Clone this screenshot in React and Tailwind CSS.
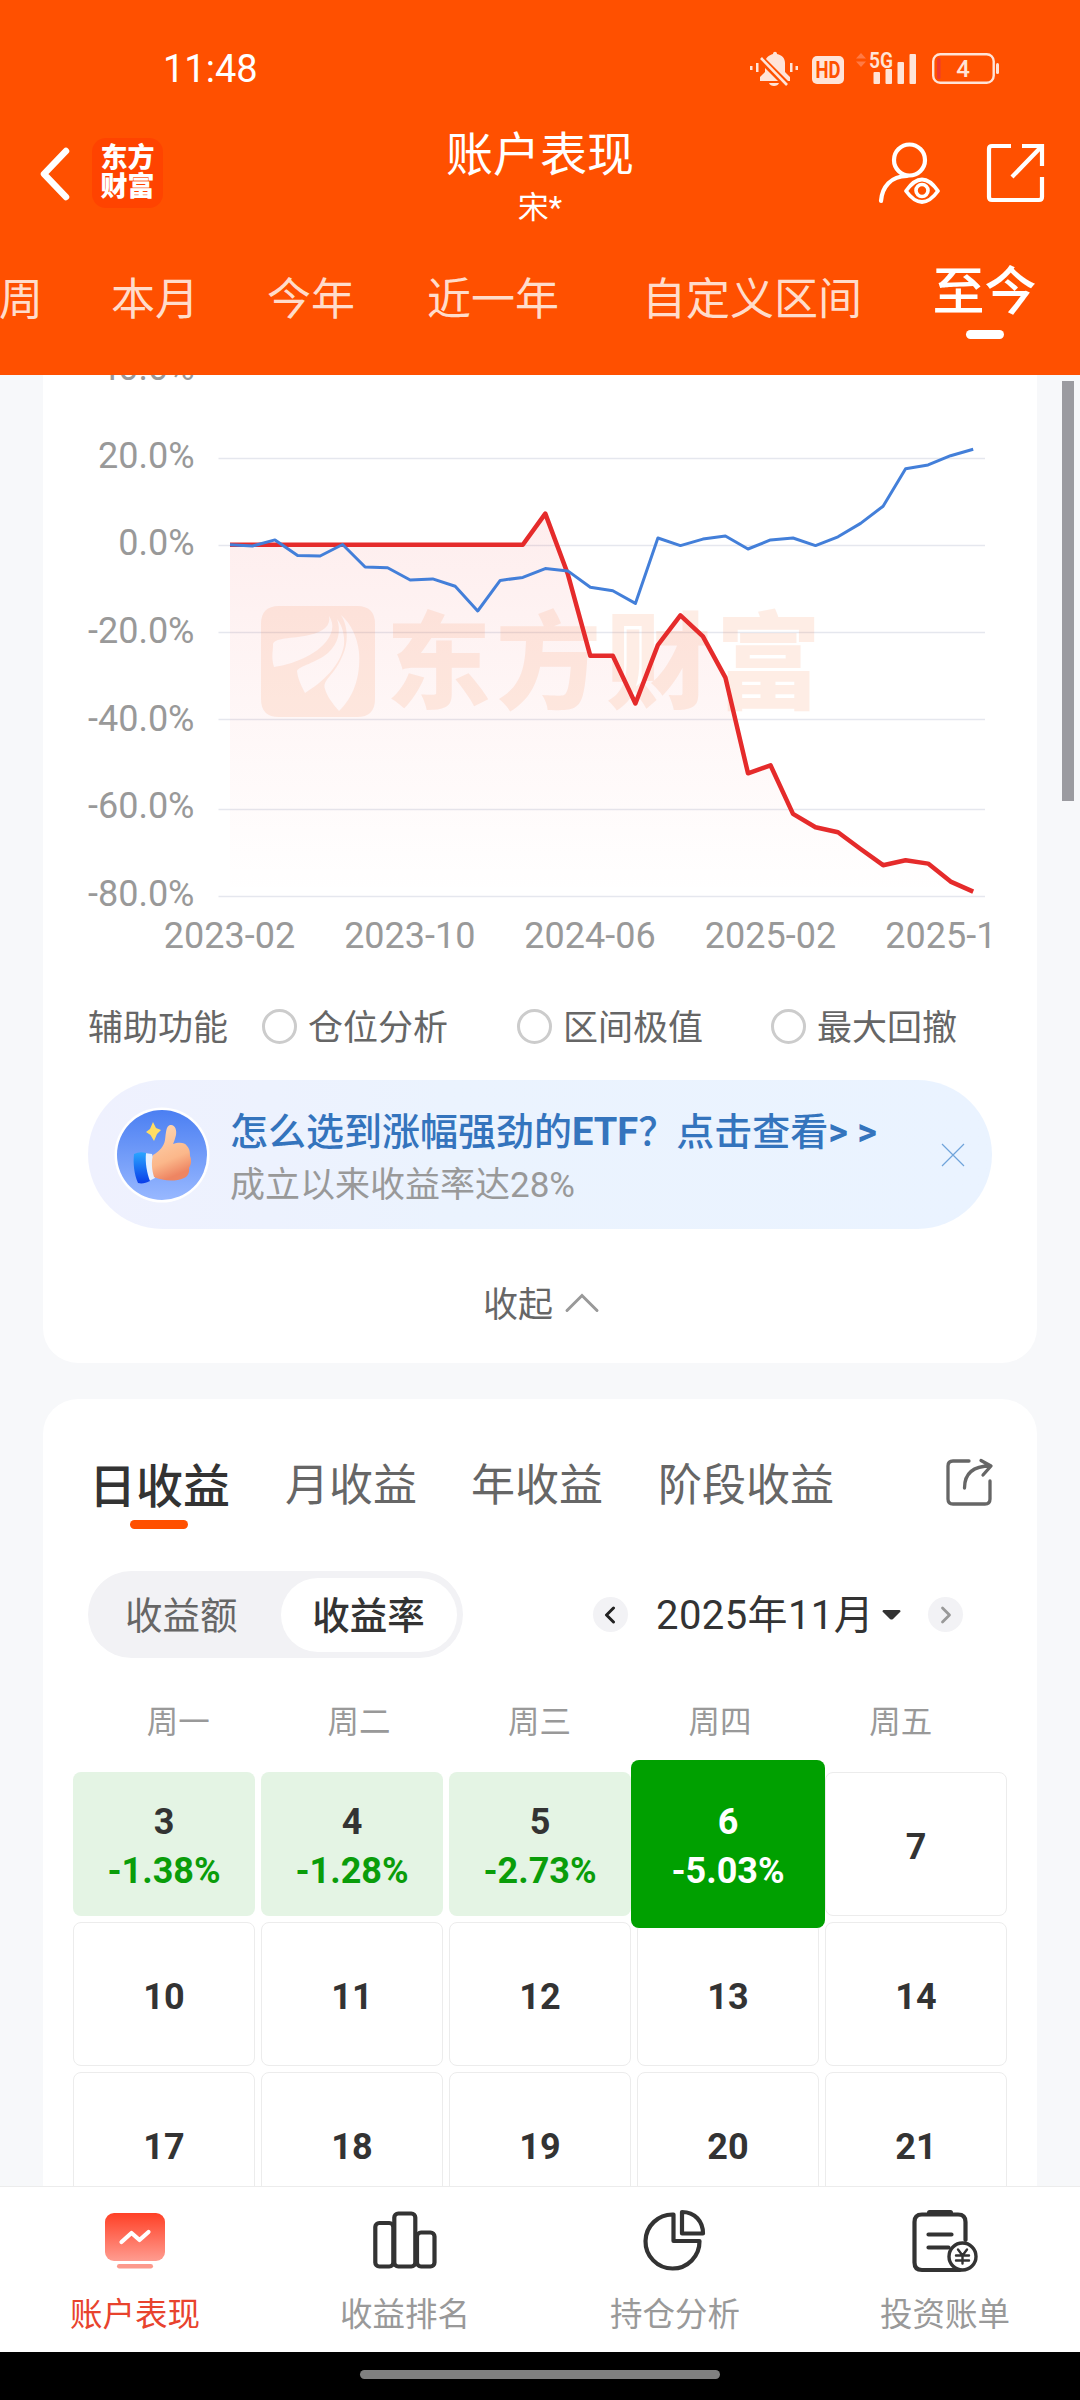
import React from "react";

const RED = [
  544.8, 544.8, 544.8, 544.8, 544.8, 544.8, 544.8, 544.8, 544.8, 544.8, 544.8, 544.8, 544.8, 544.8,
  513.6, 574, 655.8, 655.8, 703.5, 645, 615.3, 636.3, 677.6, 773.3, 765.3, 813.9, 827.3, 832.3, 849,
  865.2, 860.2, 863.6, 881.6, 891.6,
];
const BLUE = [
  544.8, 546, 539.9, 555.6, 556, 544.5, 567, 567.8, 580, 578.9, 586.2, 611, 580.4, 577.4, 568.6,
  570.9, 587.3, 590.8, 603.4, 538, 545.6, 539.1, 536, 549, 539.9, 538, 545.6, 536.8, 523.4, 506.2,
  468.7, 464.9, 455.7, 449.2,
];
const toPoints = (values) =>
  values.map((y, i) => `${(230 + i * 22.52).toFixed(1)},${y}`).join(" ");

const Y_LABELS = [
  ["40.0%", 367], ["20.0%", 455], ["0.0%", 542.3], ["-20.0%", 630.3], ["-40.0%", 718], ["-60.0%", 805], ["-80.0%", 893],
];
const X_LABELS = [["2023-02", 229.5], ["2023-10", 409.8], ["2024-06", 590], ["2025-02", 770.5], ["2025-10", 951]];
const GRID = [458.5, 545.5, 632.5, 719.5, 809.5, 896.5];

function StatusBar() {
  return (
    <div className="flex h-[120px] items-start pt-[48px] pl-[163px] pr-[80px]">
      <div className="mt-[2px] text-[38px] leading-[38px]">11:48</div>
      <svg className="ml-auto" width="252" height="40" viewBox="748 48 252 40" fill="#ffe4d8">
        <path d="M760 81v-4l5-5v-9c0-5 4-8 8-9 0-3 4-3 4 0 5 1 8 4 8 9v9l5 5v4z" />
        <path d="M769 83h10c-1 4-9 4-10 0z" />
        <path d="M757 55l31 31" stroke="#ff5000" strokeWidth="7" />
        <path d="M761 58l26 27" stroke="#ffe4d8" strokeWidth="2.6" />
        <rect x="750" y="66" width="2.5" height="4" />
        <rect x="756" y="63" width="2.5" height="9" />
        <rect x="790" y="63" width="2.5" height="9" />
        <rect x="795.500" y="66" width="2.500" height="4" />
        <rect x="812" y="56" width="32" height="28" rx="5" />
        <text x="828" y="78" fill="#ff5000" fontSize="23" fontWeight="700" textAnchor="middle" textLength="25" lengthAdjust="spacingAndGlyphs">HD</text>
        <path d="M856 58.500l5-5.500 5 5.500zM856 61.500l5 5.500 5-5.500z" fill="#ff7a45" />
        <text x="869" y="67.500" fontSize="22" fontWeight="600" textLength="24" lengthAdjust="spacingAndGlyphs">5G</text>
        <rect x="873.500" y="72" width="6.500" height="12" rx="1" />
        <rect x="885.500" y="69" width="6.500" height="15" rx="1" />
        <rect x="897.500" y="62" width="6.500" height="22" rx="1" />
        <rect x="909.500" y="54" width="6.500" height="30" rx="1" />
        <rect x="933.200" y="54.200" width="60.500" height="28.600" rx="7" fill="none" stroke="#ffe4d8" strokeWidth="2.400" />
        <rect x="996" y="63" width="3" height="11" rx="1.500" />
        <rect x="937" y="58" width="3.500" height="21" rx="1.500" fill="#ee3a30" />
        <text x="963" y="77" fontSize="24" fontWeight="500" textAnchor="middle">4</text>
      </svg>
    </div>
  );
}

function Header() {
  return (
    <header className="relative z-10 flex h-[375px] shrink-0 flex-col bg-[#ff5000] text-white">
      <StatusBar />
      <div className="flex h-[110px] items-start justify-between">
        <div className="flex w-[360px] pl-[39px]">
          <svg className="mt-[26px]" width="32" height="56" viewBox="0 0 32 56" fill="none" stroke="#fff" strokeWidth="6.500" strokeLinecap="round" strokeLinejoin="round">
            <path d="M27 5L5 28l22 23" />
          </svg>
          <div className="ml-[21px] mt-[18px] flex h-[70px] w-[71px] flex-col items-center justify-center rounded-[14px] bg-[#ff4300] text-[27px] font-black leading-[29px]">
            <span>东方</span>
            <span>财富</span>
          </div>
        </div>
        <div className="flex flex-col items-center">
          <div className="mt-[7px] text-[47px] leading-[56px]">账户表现</div>
          <div className="mt-[7px] text-[31px] leading-[36px]">宋*</div>
        </div>
        <div className="flex w-[360px] justify-end pr-[34px] pt-[22px]">
          <svg width="168" height="64" viewBox="878 142 168 64" fill="none" stroke="#fff" strokeWidth="4.200">
            <circle cx="909.500" cy="160" r="15.500" />
            <path d="M881 201c1-14 10-25 26-25" strokeLinecap="round" />
            <path d="M906 191q16-23 32 0-16 22-32 0z" strokeWidth="3.800" strokeLinejoin="round" />
            <circle cx="922" cy="190.500" r="6" strokeWidth="3.600" />
            <path d="M1011 146h-19q-3 0-3 3v48q0 3 3 3h47q3 0 3-3v-20M1022 146h20v20M1042 146l-30 31" />
          </svg>
        </div>
      </div>
      <nav className="flex flex-1 whitespace-nowrap text-[44px] leading-[56px] text-[#ffdccb]">
        <span className="-ml-px mt-[42px] w-[112px]">周</span>
        <span className="mt-[42px] w-[156px]">本月</span>
        <span className="mt-[42px] w-[160px]">今年</span>
        <span className="mt-[42px] w-[215px]">近一年</span>
        <span className="mt-[42px] w-[290px]">自定义区间</span>
        <div className="flex w-[105px] flex-col items-center text-white">
          <span className="mt-[33px] text-[52px] font-medium leading-[60px]">至今</span>
          <span className="mt-[7px] h-[9px] w-[38px] rounded-full bg-white" />
        </div>
      </nav>
    </header>
  );
}

function Chart() {
  return (
    <svg className="block font-['Roboto','Noto_Sans_CJK_SC',sans-serif]" width="994" height="595" viewBox="43 375 994 595">
      <defs>
        <linearGradient id="area" x1="0" y1="513" x2="0" y2="896" gradientUnits="userSpaceOnUse">
          <stop offset="0" stopColor="#f03030" stopOpacity="0.085" />
          <stop offset="1" stopColor="#f03030" stopOpacity="0" />
        </linearGradient>
        <clipPath id="axis">
          <rect x="43" y="900" width="949.500" height="70" />
        </clipPath>
      </defs>
      <g stroke="#e5e7ee" strokeWidth="1.500">
        {GRID.map((y) => <line key={y} x1="218.500" x2="985" y1={y} y2={y} />)}
      </g>
      <polygon points={`230,896 ${toPoints(RED)} 973,896`} fill="url(#area)" />
      <g fill="#fb7a3a" opacity="0.125">
        <path
          fillRule="evenodd"
          d="M279 606h78q18 0 18 18v75q0 18-18 18h-78q-18 0-18-18v-75q0-18 18-18z
             M329 616c2 9-5 16-20 19-17 4-36 2-36 10 0 7-2 12 1 22 22-3 53-16 58-37 1-5 0-10-3-14z
             M337 619c4 11 2 24-9 34-12 10-29 13-31 18 1 8 3 12 8 22 18-11 36-28 39-48 1-10-2-20-7-26z
             M341 615c8 13 8 31-2 48-7 13-17 18-14 26 2 7 7 14 14 22 14-13 22-34 20-59-2-16-8-28-18-37z"
        />
        <text x="386" y="700" fontSize="105" fontWeight="900" letterSpacing="5">东方财富</text>
      </g>
      <polyline points={toPoints(RED)} fill="none" stroke="#e52b2b" strokeWidth="4.500" strokeLinejoin="round" />
      <polyline points={toPoints(BLUE)} fill="none" stroke="#437fd9" strokeWidth="3" strokeLinejoin="round" />
      <g fill="#999" fontSize="36">
        {Y_LABELS.map(([t, y]) => <text key={t} x="194.500" y={y + 13} textAnchor="end">{t}</text>)}
        <g clipPath="url(#axis)">
          {X_LABELS.map(([t, x]) => <text key={t} x={x} y="948" textAnchor="middle">{t}</text>)}
        </g>
      </g>
    </svg>
  );
}

function Radio({ label, className }) {
  return (
    <div className={"flex items-center " + className}>
      <span className="mr-[11px] size-[35px] rounded-full border-[3px] border-[#ccc]" />
      <span className="pt-[5px] text-[#666]">{label}</span>
    </div>
  );
}

function ThumbBadge() {
  return (
    <svg width="96" height="96" viewBox="0 0 96 96">
      <defs>
        <linearGradient id="sky" x1="0" y1="0" x2="0" y2="1">
          <stop offset="0" stopColor="#4b7ff2" />
          <stop offset="1" stopColor="#98b8ff" />
        </linearGradient>
        <linearGradient id="skin" x1="0" y1="0" x2="0.300" y2="1">
          <stop offset="0" stopColor="#ffd9b5" />
          <stop offset="0.700" stopColor="#fbb78a" />
          <stop offset="1" stopColor="#ee8562" />
        </linearGradient>
        <linearGradient id="cuff" x1="0" y1="0" x2="0" y2="1">
          <stop offset="0" stopColor="#2aa6ff" />
          <stop offset="1" stopColor="#0a3de8" />
        </linearGradient>
      </defs>
      <circle cx="48" cy="48" r="47.500" fill="#fff" />
      <circle cx="48" cy="48" r="45" fill="url(#sky)" />
      <path d="M39 15l3 6 5 2-4 4-3 7-3.500-6-4.500-3 4-3z" fill="#ffdd62" />
      <path d="M30 46l8 1c3 8 4 16 3 24l-8 4c-4-9-5-20-3-29z" fill="#e6f0ff" />
      <path d="M20 47q6-3 12-1c-1 10 1 20 4 28-4 2-8 3-12 2-4-9-5-20-4-29z" fill="url(#cuff)" />
      <path d="M39 48c7-4 11-9 12-15 1-7 1-14 5-15 5-1 7 5 6 10-1 4-2 7-3 9 5-2 12-2 14 2 3 3 3 7 3 10 2 5 1 9-1 12 1 5-2 9-5 10-9 4-21 3-30-1-2-7-3-14-1-22z" fill="url(#skin)" />
    </svg>
  );
}

function PerformanceCard() {
  return (
    <section className="h-[988px] shrink-0 rounded-b-[35px] bg-white">
      <Chart />
      <div className="mt-[36px] flex h-[40px] items-center whitespace-nowrap pl-[45px] text-[35px] leading-[40px]">
        <span className="w-[174px] pt-[5px] text-[#666]">辅助功能</span>
        <Radio label="仓位分析" className="w-[255px]" />
        <Radio label="区间极值" className="w-[254px]" />
        <Radio label="最大回撤" className="w-[190px]" />
      </div>
      <div className="ml-[45px] mt-[34px] flex h-[149px] w-[904px] items-center rounded-full bg-gradient-to-r from-[#eff1fe] via-[#ebf3fe] via-40% to-[#eaf3ff] pl-[26px] pr-[27px]">
        <ThumbBadge />
        <div className="ml-[20px] whitespace-nowrap pt-[6px]">
          <div className="text-[38px] font-medium leading-[48px] text-[#3474bd]">
            怎么选到涨幅强劲的<b>ETF</b>？点击查看<b>&gt; &gt;</b>
          </div>
          <div className="mt-[8px] text-[35px] leading-[44px] text-[#999]">成立以来收益率达28%</div>
        </div>
        <svg className="ml-auto" width="24" height="24" viewBox="0 0 24 24" stroke="#6fa3da" strokeWidth="1.200">
          <path d="M1 1l22 22M23 1L1 23" />
        </svg>
      </div>
      <div className="mt-[54px] flex h-[42px] items-center pl-[440px] text-[35px] leading-[42px] text-[#666]">
        <span className="pt-[3px]">收起</span>
        <svg className="ml-[10px]" width="38" height="22" viewBox="0 0 38 22" fill="none" stroke="#999" strokeWidth="3" strokeLinecap="round">
          <path d="M4 17.500L19 2.500l15 15" />
        </svg>
      </div>
    </section>
  );
}

const CELLS = [
  ["3", "-1.38%"], ["4", "-1.28%"], ["5", "-2.73%"], ["6", "-5.03%"], ["7"],
  ["10"], ["11"], ["12"], ["13"], ["14"],
  ["17"], ["18"], ["19"], ["20"], ["21"],
];

function DayCell({ day, rate }) {
  if (day === "6") {
    return (
      <div className="relative z-10 -mx-[6px] -my-[12px] flex h-[168px] flex-col items-center justify-center rounded-lg bg-[#00a000] pt-[6px] text-white">
        <span>{day}</span>
        <span>{rate}</span>
      </div>
    );
  }
  if (rate) {
    return (
      <div className="flex h-[144px] flex-col items-center justify-center rounded-lg bg-[#e4f4e4] pt-[6px]">
        <span>{day}</span>
        <span className="text-[#0a9d0a]">{rate}</span>
      </div>
    );
  }
  return (
    <div className="flex h-[144px] items-center justify-center rounded-lg border border-[#ececec] pt-[6px]">{day}</div>
  );
}

function CalendarCard() {
  return (
    <section className="mt-[36px] h-[900px] shrink-0 rounded-t-[35px] bg-white">
      <div className="flex h-[172px] whitespace-nowrap pl-[46px] pt-[58px] text-[44px] leading-[52px] text-[#666]">
        <div className="flex w-[196px] flex-col items-start">
          <span className="mt-[3px] text-[47px] font-medium leading-[54px] text-[#333]">日收益</span>
          <span className="ml-[41px] mt-[6px] h-[9px] w-[58px] rounded-full bg-[#ff5000]" />
        </div>
        <span className="mt-[3px] w-[186px]">月收益</span>
        <span className="mt-[3px] w-[187px]">年收益</span>
        <span className="mt-[3px] w-[286px]">阶段收益</span>
        <svg width="50" height="50" viewBox="944 1457 50 50" fill="none" stroke="#666" strokeWidth="3.300" strokeLinecap="round" strokeLinejoin="round">
          <path d="M969 1461h-16q-5 0-5 5v33q0 5 5 5h32q5 0 5-5v-18" />
          <path d="M964.500 1488c0-14 8-22 26-22M981 1460.500l10 5.500-8 9" />
        </svg>
      </div>
      <div className="flex h-[87px] items-center whitespace-nowrap pl-[45px]">
        <div className="flex h-[87px] w-[375px] items-center rounded-full bg-[#f2f2f5] pr-[6px] text-[37.500px] leading-[74px]">
          <span className="flex-1 pl-[37px] pt-[2px] text-[#666]">收益额</span>
          <span className="h-[74px] w-[176px] rounded-full bg-white pr-px text-center font-medium leading-[77px] text-[#333]">收益率</span>
        </div>
        <span className="ml-[130px] flex size-[35px] items-center justify-center rounded-full bg-[#f2f2f5] pr-[2px]">
          <svg width="12" height="18" viewBox="0 0 12 18" fill="none" stroke="#222" strokeWidth="3" strokeLinecap="round" strokeLinejoin="round"><path d="M9.500 2L2.500 9l7 7" /></svg>
        </span>
        <span className="ml-[28px] w-[217px] pt-[2px] text-[40px] leading-[50px] tracking-[0.400px] text-[#333]">2025年11月</span>
        <svg className="ml-[9px]" width="19" height="10" viewBox="0 0 19 10" fill="#333"><path d="M1.500 0h16q2 1 0 2.500l-6.500 6.500q-1.500 1-3 0L1.500 2.500Q-.5 1 1.500 0z" /></svg>
        <span className="ml-[27px] flex size-[35px] items-center justify-center rounded-full bg-[#f2f2f5]">
          <svg width="12" height="18" viewBox="0 0 12 18" fill="none" stroke="#999" strokeWidth="2.800" strokeLinecap="round" strokeLinejoin="round"><path d="M2.500 2l7 7-7 7" /></svg>
        </span>
      </div>
      <div className="mt-[44px] grid h-[42px] grid-cols-5 pl-[45px] pr-[46px] text-center text-[31.500px] leading-[42px] text-[#999]">
        {["周一", "周二", "周三", "周四", "周五"].map((d) => <span key={d}>{d}</span>)}
      </div>
      <div className="mt-[28px] grid grid-cols-5 gap-[6px] pl-[30px] pr-[30px] text-[36px] font-bold leading-[49px] text-[#333]">
        {CELLS.map(([day, rate]) => <DayCell key={day} day={day} rate={rate} />)}
      </div>
    </section>
  );
}

function BottomNav() {
  const line = { fill: "none", stroke: "#333", strokeWidth: 4.2, strokeLinecap: "round", strokeLinejoin: "round" };
  return (
    <nav className="grid h-[166px] shrink-0 grid-cols-4 border-t border-[#ececec] bg-white text-center text-[32.500px] leading-[40px] text-[#999]">
      <div className="flex flex-col items-center pt-[20px] text-[#e8432d]">
        <svg width="68" height="66" viewBox="101 2207 68 66">
          <defs>
            <linearGradient id="screen" x1="0" y1="0" x2="0" y2="1">
              <stop offset="0" stopColor="#ff4026" />
              <stop offset="1" stopColor="#ff9c90" />
            </linearGradient>
          </defs>
          <rect x="105" y="2213" width="60" height="48" rx="9" fill="url(#screen)" />
          <rect x="117" y="2264" width="36" height="4.500" rx="2.200" fill="#fc9a8c" />
          <path d="M121.500 2242l10-9 8 7 9-8" fill="none" stroke="#fff" strokeWidth="4.200" strokeLinecap="round" strokeLinejoin="round" />
        </svg>
        <span className="mt-[22px]">账户表现</span>
      </div>
      <div className="flex flex-col items-center pt-[20px]">
        <svg width="68" height="66" viewBox="371.500 2207 68 66" {...line}>
          <rect x="375.800" y="2223" width="18" height="43.500" rx="4" />
          <rect x="394.800" y="2213.500" width="21" height="53" rx="4" />
          <rect x="417.500" y="2232.500" width="17.500" height="34" rx="4" />
        </svg>
        <span className="mt-[22px]">收益排名</span>
      </div>
      <div className="flex flex-col items-center pt-[20px]">
        <svg width="68" height="66" viewBox="641 2207 68 66" {...line}>
          <path d="M673.500 2214.500a27 27 0 1 0 26 26.500h-26z" />
          <path d="M682 2212v21.500h21c0-12-8-21.500-21-21.500z" />
        </svg>
        <span className="mt-[22px]">持仓分析</span>
      </div>
      <div className="flex flex-col items-center pt-[20px]">
        <svg width="68" height="66" viewBox="911.500 2207 68 66" {...line}>
          <path d="M966 2240v-18q0-7.500-7.500-7.500h-36q-7.500 0-7.500 7.500v40.500q0 7.500 7.500 7.500h38" />
          <path d="M930 2212.500h21" strokeWidth="5" />
          <path d="M929 2234.500h23M929 2247.500h20" />
          <circle cx="963" cy="2256.500" r="13.500" fill="#fff" strokeWidth="3.400" />
          <path d="M958.500 2249.500l4.500 6 4.500-6M963 2255.500v8M956.500 2255.500h13M956.500 2260.500h13" strokeWidth="2.400" />
        </svg>
        <span className="mt-[22px]">投资账单</span>
      </div>
    </nav>
  );
}

export default function App() {
  return (
    <div className="flex h-[2400px] w-[1080px] flex-col overflow-hidden bg-black font-['Roboto','Noto_Sans_CJK_SC',sans-serif]">
      <Header />
      <main className="relative flex h-[1811px] shrink-0 flex-col overflow-hidden bg-[#f7f8fa] px-[43px]">
        <PerformanceCard />
        <CalendarCard />
        <div className="absolute right-[6px] top-[6px] h-[420px] w-[12px] bg-[#9b9ba0]" />
      </main>
      <BottomNav />
      <div className="flex h-[48px] shrink-0 justify-center bg-black pt-[18px]">
        <div className="h-[9px] w-[360px] rounded-full bg-[#808080]" />
      </div>
    </div>
  );
}
